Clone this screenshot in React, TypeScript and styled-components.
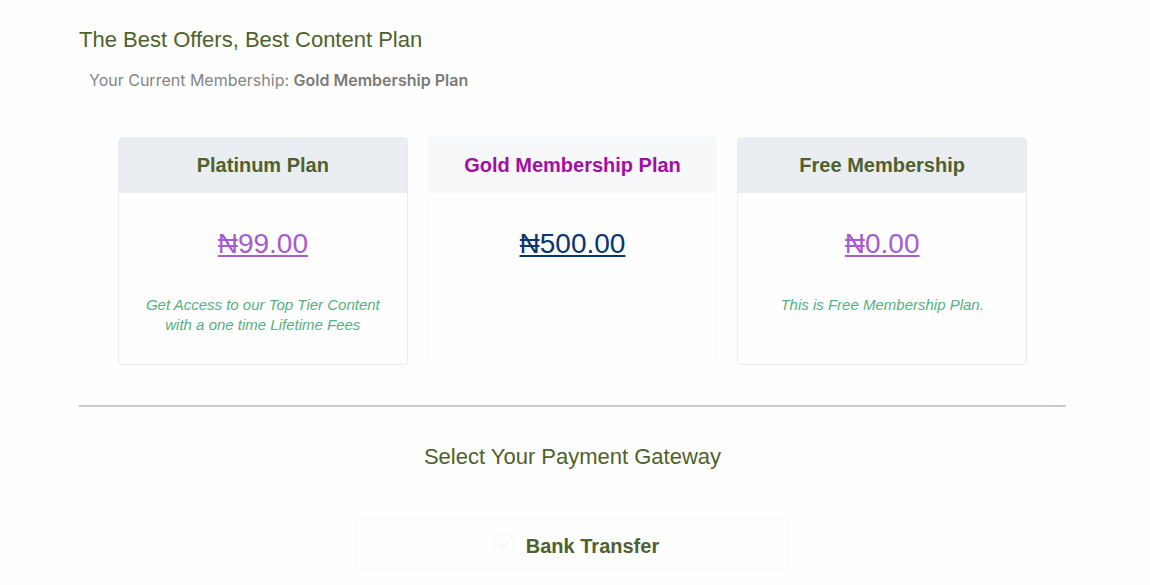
import React from "react";
import styled, { createGlobalStyle } from "styled-components";

const GlobalStyle = createGlobalStyle`
  *, *::before, *::after { box-sizing: border-box; }
  body {
    margin: 0;
    background: #fefefe;
    color: #4f612c;
    font-family: "Liberation Sans", Arial, sans-serif;
  }
`;

const Page = styled.main`
  padding: 24px 84px 16px 79px;
`;

const Heading = styled.h1`
  margin: 0;
  font-size: 22px;
  line-height: 32px;
  font-weight: 400;
`;

const CurrentPlan = styled.p`
  margin: 12px 0 0;
  padding-left: 10px;
  color: #858585;
  font-family: Inter, sans-serif;
  font-size: 16px;
  line-height: 24px;

  strong {
    color: #7b7b76;
    font-weight: 600;
  }
`;

const Plans = styled.section`
  display: grid;
  grid-template-columns: repeat(3, minmax(0, 1fr));
  gap: 20px;
  margin-top: 45px;
  padding: 0 39px;
`;

const PlanCard = styled.article<{ $current: boolean }>`
  min-height: 228px;
  overflow: hidden;
  border: 1px solid ${(p) => (p.$current ? "#f7f8f8" : "#e9ebec")};
  border-radius: 4px;
  text-align: center;
`;

const PlanName = styled.h2<{ $current: boolean }>`
  margin: -1px -1px 0;
  padding: 14px 12px;
  background: ${(p) => (p.$current ? "#f6f8fa" : "#eaeef2")};
  color: ${(p) => (p.$current ? "#a30fa3" : "#4f612c")};
  font-size: 20px;
  line-height: 28px;
  font-weight: 700;
`;

const PlanBody = styled.div`
  padding: 33px 24px 28px;
`;

const Price = styled.a<{ $current: boolean }>`
  color: ${(p) => (p.$current ? "#0b3472" : "#a45cd0")};
  font-size: 28px;
  line-height: 36px;
  text-decoration: underline;
  text-decoration-skip-ink: none;
`;

const Description = styled.p`
  margin: 33px 0 0;
  color: #58ae82;
  font-size: 15px;
  line-height: 20px;
  font-style: italic;
`;

const Divider = styled.hr`
  height: 2px;
  margin: 40px 0 0;
  border: 0;
  background: #cac8da;
`;

const Gateways = styled.fieldset`
  display: flex;
  flex-direction: column;
  align-items: center;
  margin: 0;
  padding: 34px 0 0;
  border: 0;
`;

const GatewayHeading = styled.legend`
  float: left;
  width: 100%;
  padding: 0;
  font-size: 22px;
  line-height: 32px;
  text-align: center;
`;

const GatewayOption = styled.label`
  display: flex;
  align-items: center;
  justify-content: center;
  gap: 8px;
  width: 100%;
  max-width: 435px;
  min-height: 52px;
  margin-top: 45px;
  padding: 4px 0 0 4px;
  border: 1px solid #f7f7f7;
  border-radius: 3px;
  font-size: 20px;
  line-height: 28px;
  font-weight: 700;
  cursor: pointer;
`;

const CheckMark = styled.span`
  display: grid;
  width: 28px;
  height: 28px;

  > * {
    grid-area: 1 / 1;
    width: 28px;
    height: 28px;
    margin: 0;
  }

  input {
    appearance: none;
  }

  svg {
    pointer-events: none;
  }
`;

interface Plan {
  name: string;
  price: string;
  description?: string;
  current?: boolean;
}

const plans: Plan[] = [
  {
    name: "Platinum Plan",
    price: "₦99.00",
    description: "Get Access to our Top Tier Content with a one time Lifetime Fees",
  },
  { name: "Gold Membership Plan", price: "₦500.00", current: true },
  { name: "Free Membership", price: "₦0.00", description: "This is Free Membership Plan." },
];

export default function App() {
  return (
    <>
      <GlobalStyle />
      <Page>
        <Heading>The Best Offers, Best Content Plan</Heading>
        <CurrentPlan>
          Your Current Membership: <strong>Gold Membership Plan</strong>
        </CurrentPlan>
        <Plans>
          {plans.map(({ name, price, description, current = false }) => (
            <PlanCard key={name} $current={current}>
              <PlanName $current={current}>{name}</PlanName>
              <PlanBody>
                <Price href="#payment" $current={current}>
                  {price}
                </Price>
                {description && <Description>{description}</Description>}
              </PlanBody>
            </PlanCard>
          ))}
        </Plans>
        <Divider />
        <Gateways id="payment">
          <GatewayHeading>Select Your Payment Gateway</GatewayHeading>
          <GatewayOption>
            <CheckMark>
              <input type="radio" name="gateway" value="bank-transfer" />
              <svg viewBox="0 0 28 28" fill="none" aria-hidden="true">
                <circle cx="13.5" cy="12.5" r="11" stroke="#f9f9f9" strokeWidth="2" />
                <path d="M9 12.5l3.3 3.3 6.2-6.2" stroke="#f7f7f7" strokeWidth="3.4" />
              </svg>
            </CheckMark>
            Bank Transfer
          </GatewayOption>
        </Gateways>
      </Page>
    </>
  );
}
